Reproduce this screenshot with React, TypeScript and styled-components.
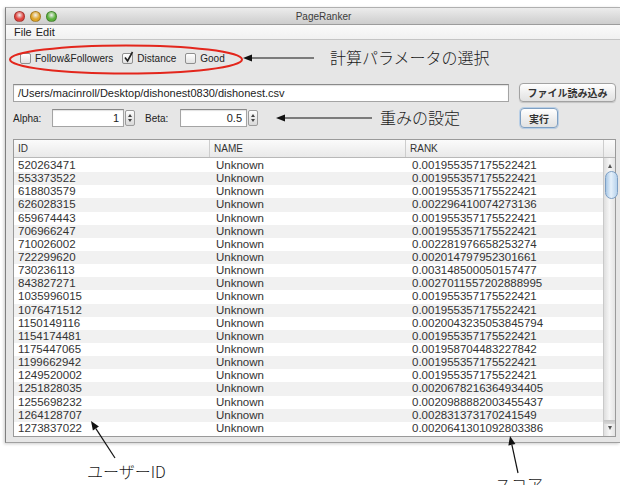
import styled, { createGlobalStyle } from "styled-components";

const UI_FONT = `"Liberation Sans", "Noto Sans CJK JP", sans-serif`;
const JP_FONT = `"Noto Sans CJK JP", "Liberation Sans", sans-serif`;

const ROWS: [string, string][] = [
  ["520263471", "0.001955357175522421"],
  ["553373522", "0.001955357175522421"],
  ["618803579", "0.001955357175522421"],
  ["626028315", "0.002296410074273136"],
  ["659674443", "0.001955357175522421"],
  ["706966247", "0.001955357175522421"],
  ["710026002", "0.002281976658253274"],
  ["722299620", "0.002014797952301661"],
  ["730236113", "0.003148500050157477"],
  ["843827271", "0.0027011557202888995"],
  ["1035996015", "0.001955357175522421"],
  ["1076471512", "0.001955357175522421"],
  ["1150149116", "0.0020043235053845794"],
  ["1154174481", "0.001955357175522421"],
  ["1175447065", "0.001958704483227842"],
  ["1199662942", "0.001955357175522421"],
  ["1249520002", "0.001955357175522421"],
  ["1251828035", "0.0020678216364934405"],
  ["1255698232", "0.0020988882003455437"],
  ["1264128707", "0.002831373170241549"],
  ["1273837022", "0.0020641301092803386"],
];

const GlobalStyle = createGlobalStyle`
  html, body {
    margin: 0;
    padding: 0;
    background: #fff;
  }
  body {
    font-family: ${UI_FONT};
    color: #1e1e1e;
  }
`;

const Page = styled.div`
  position: relative;
  width: 620px;
  height: 485px;
  overflow: hidden;
  background: #fff;
`;

/* ---------- window chrome ---------- */

const Window = styled.div`
  box-sizing: border-box;
  margin: 7px 0 0 5px;
  width: 615px;
  height: 436px;
  display: flex;
  flex-direction: column;
  background: #e6e6e6;
  border-left: 1px solid #7f7f7f;
  border-top: 1px solid #b0b0b0;
  border-bottom: 1px solid #a0a0a0;
  box-shadow: -1px 1px 3px rgba(0, 0, 0, 0.2);
`;

const TitleBar = styled.div`
  height: 16px;
  display: flex;
  align-items: center;
  padding-left: 8px;
  background: linear-gradient(#ececec, #cdcdcd);
  border-bottom: 1px solid #9c9c9c;
`;

const Lights = styled.div`
  display: flex;
  gap: 5px;
`;

const Light = styled.span<{ $color: string }>`
  width: 11px;
  height: 11px;
  border-radius: 50%;
  box-sizing: border-box;
  border: 1px solid rgba(0, 0, 0, 0.25);
  background: radial-gradient(
    circle at 50% 35%,
    #fff8 0,
    ${(p) => p.$color} 55%
  );
`;

const Title = styled.div`
  flex: 1;
  padding-right: 30px;
  text-align: center;
  font-size: 10px;
  color: #3c3c3c;
`;

const MenuBar = styled.div`
  height: 14px;
  display: flex;
  align-items: center;
  gap: 4px;
  padding-left: 8px;
  background: linear-gradient(#fafafa, #f1f1f1);
  border-bottom: 1px solid #c4c4c4;
  font-size: 11px;
  color: #222;
`;

const Content = styled.div`
  flex: 1;
  min-height: 0;
  display: flex;
  flex-direction: column;
  padding: 12px 4px 5px 7px;
`;

/* ---------- checkbox row ---------- */

const CheckRow = styled.div`
  height: 12px;
  display: flex;
  align-items: center;
  gap: 9px;
  padding-left: 7px;
`;

const CheckItem = styled.label`
  display: flex;
  align-items: center;
  gap: 4px;
  font-size: 10px;
  color: #222;
`;

const Box = styled.span`
  position: relative;
  width: 11px;
  height: 11px;
  box-sizing: border-box;
  border: 1px solid #8f8f8f;
  border-radius: 2px;
  background: linear-gradient(#ffffff, #e2e2e2);
`;

const Tick = styled.svg`
  position: absolute;
  left: 0;
  top: -3px;
  width: 11px;
  height: 12px;
`;

function Check({ label, checked }: { label: string; checked?: boolean }) {
  return (
    <CheckItem>
      <Box>
        {checked && (
          <Tick viewBox="0 0 11 12">
            <path
              d="M2 6.5 L4.6 10 L9.5 1"
              fill="none"
              stroke="#202020"
              strokeWidth="1.6"
            />
          </Tick>
        )}
      </Box>
      {label}
    </CheckItem>
  );
}

/* ---------- file row ---------- */

const PathRow = styled.div`
  margin-top: 19px;
  height: 19px;
  display: flex;
  align-items: center;
  gap: 10px;
`;

const Field = styled.div<{ $width: number; $align?: string }>`
  box-sizing: border-box;
  width: ${(p) => p.$width}px;
  height: 18px;
  padding: 0 4px;
  display: flex;
  align-items: center;
  justify-content: ${(p) => p.$align ?? "flex-start"};
  background: #fff;
  border: 1px solid #a4a4a4;
  border-top-color: #8a8a8a;
  box-shadow: inset 0 1px 1px rgba(0, 0, 0, 0.12);
  font-size: 11px;
  color: #222;
  white-space: nowrap;
`;

const Button = styled.div<{ $width: number; $default?: boolean }>`
  box-sizing: border-box;
  width: ${(p) => p.$width}px;
  height: ${(p) => (p.$default ? 20 : 19)}px;
  display: flex;
  align-items: center;
  justify-content: center;
  border-radius: 4px;
  border: 1px solid ${(p) => (p.$default ? "#7e9fc2" : "#a2a2a2")};
  background: linear-gradient(#ffffff, #ececec 60%, #e2e2e2);
  box-shadow: ${(p) =>
    p.$default
      ? "0 0 0 1px #b9cfe6, 0 1px 1px rgba(0,0,0,0.15)"
      : "0 1px 1px rgba(0,0,0,0.15)"};
  font-family: ${JP_FONT};
  font-size: 10px;
  font-weight: 700;
  color: #333;
`;

/* ---------- weight row ---------- */

const ParamRow = styled.div`
  margin-top: 6px;
  height: 20px;
  display: flex;
  align-items: center;
`;

const ParamLabel = styled.span<{ $width: number }>`
  width: ${(p) => p.$width}px;
  font-size: 10px;
  color: #222;
`;

const Stepper = styled.div`
  box-sizing: border-box;
  margin: 0 10px 0 1px;
  width: 10px;
  height: 16px;
  display: flex;
  flex-direction: column;
  align-items: center;
  justify-content: space-evenly;
  border: 1px solid #9c9c9c;
  border-radius: 2px;
  background: linear-gradient(#fdfdfd, #d9d9d9);
`;

const StepArrow = styled.span<{ $up?: boolean }>`
  width: 0;
  height: 0;
  border-left: 2px solid transparent;
  border-right: 2px solid transparent;
  ${(p) =>
    p.$up ? "border-bottom: 3px solid #444;" : "border-top: 3px solid #444;"}
`;

const Spacer = styled.div`
  flex: 1;
`;

const RunButton = styled(Button)`
  margin-right: 58px;
`;

/* ---------- result table ---------- */

const Table = styled.div`
  margin-top: 11px;
  flex: 1;
  min-height: 0;
  display: flex;
  flex-direction: column;
  border: 1px solid #9a9a9a;
  background: #fff;
`;

const COLUMNS = "196px 196px 198px 1fr";

const HeaderRow = styled.div`
  height: 17px;
  display: grid;
  grid-template-columns: ${COLUMNS};
  background: linear-gradient(#fbfbfb, #e9e9e9);
  border-bottom: 1px solid #b8b8b8;
`;

const HeadCell = styled.div`
  display: flex;
  align-items: center;
  padding-left: 4px;
  border-right: 1px solid #cdcdcd;
  font-size: 10px;
  color: #333;

  &:last-child {
    border-right: none;
  }
`;

const Body = styled.div`
  flex: 1;
  min-height: 0;
  display: flex;
`;

const RowList = styled.div`
  flex: 1;
  padding-top: 1px;
  overflow: hidden;
`;

const Row = styled.div<{ $odd: boolean }>`
  height: 13.15px;
  display: grid;
  grid-template-columns: 196px 196px 198px;
  background: ${(p) => (p.$odd ? "#f1f1f1" : "#ffffff")};
`;

const Cell = styled.div<{ $pad: number }>`
  padding-left: ${(p) => p.$pad}px;
  font-size: 11.5px;
  line-height: 13.15px;
  color: #333;
  white-space: nowrap;
`;

const ScrollTrack = styled.div`
  width: 11px;
  display: flex;
  flex-direction: column;
  align-items: center;
  border-left: 1px solid #c9c9c9;
  background: linear-gradient(90deg, #dedede, #f6f6f6 50%, #e4e4e4);
`;

const ScrollArrow = styled.span<{ $up?: boolean }>`
  margin: ${(p) => (p.$up ? "6px 0 3px" : "2px 0 6px")};
  width: 0;
  height: 0;
  border-left: 2px solid transparent;
  border-right: 2px solid transparent;
  ${(p) =>
    p.$up ? "border-bottom: 4px solid #555;" : "border-top: 4px solid #555;"}
`;

const Thumb = styled.div`
  box-sizing: border-box;
  margin-left: 4px;
  width: 13px;
  height: 28px;
  border-radius: 7px;
  border: 1px solid #7d9fc4;
  background: linear-gradient(90deg, #a9c8e6, #e6f1fb 45%, #b7d2ec);
`;

const TrackEnd = styled.div`
  width: 100%;
  height: 4px;
  margin-top: auto;
  background: linear-gradient(#c4c4c4, #d8d8d8);
`;

/* ---------- annotations ---------- */

const Overlay = styled.svg`
  position: absolute;
  left: 0;
  top: 0;
  width: 620px;
  height: 485px;
  pointer-events: none;
`;

const Note = styled.span<{ $x: number; $y: number }>`
  position: absolute;
  left: ${(p) => p.$x}px;
  top: ${(p) => p.$y}px;
  font-family: ${JP_FONT};
  font-size: 16px;
  font-weight: 300;
  line-height: 16px;
  color: #1a1a1a;
  white-space: nowrap;
`;

function Arrow({ x1, y1, x2, y2 }: { x1: number; y1: number; x2: number; y2: number }) {
  // line from the tail (x1,y1) to a filled head at (x2,y2)
  const a = Math.atan2(y2 - y1, x2 - x1);
  const len = 9;
  const half = 3.6;
  const bx = x2 - len * Math.cos(a);
  const by = y2 - len * Math.sin(a);
  const px = -Math.sin(a) * half;
  const py = Math.cos(a) * half;
  return (
    <g>
      <line x1={x1} y1={y1} x2={bx} y2={by} stroke="#111" strokeWidth="1.2" />
      <polygon
        points={`${x2},${y2} ${bx + px},${by + py} ${bx - px},${by - py}`}
        fill="#111"
      />
    </g>
  );
}

export default function App() {
  return (
    <Page>
      <GlobalStyle />
      <Window>
        <TitleBar>
          <Lights>
            <Light $color="#e0443e" />
            <Light $color="#e0a528" />
            <Light $color="#5bb13d" />
          </Lights>
          <Title>PageRanker</Title>
        </TitleBar>
        <MenuBar>
          <span>File</span>
          <span>Edit</span>
        </MenuBar>

        <Content>
          <CheckRow>
            <Check label="Follow&Followers" />
            <Check label="Distance" checked />
            <Check label="Good" />
          </CheckRow>

          <PathRow>
            <Field $width={497}>/Users/macinroll/Desktop/dishonest0830/dishonest.csv</Field>
            <Button $width={97}>ファイル読み込み</Button>
          </PathRow>

          <ParamRow>
            <ParamLabel $width={39}>Alpha:</ParamLabel>
            <Field $width={72} $align="flex-end">1</Field>
            <Stepper>
              <StepArrow $up />
              <StepArrow />
            </Stepper>
            <ParamLabel $width={35}>Beta:</ParamLabel>
            <Field $width={67} $align="flex-end">0.5</Field>
            <Stepper>
              <StepArrow $up />
              <StepArrow />
            </Stepper>
            <Spacer />
            <RunButton $width={38} $default>
              実行
            </RunButton>
          </ParamRow>

          <Table>
            <HeaderRow>
              <HeadCell>ID</HeadCell>
              <HeadCell>NAME</HeadCell>
              <HeadCell>RANK</HeadCell>
              <HeadCell />
            </HeaderRow>
            <Body>
              <RowList>
                {ROWS.map(([id, rank], i) => (
                  <Row key={id} $odd={i % 2 === 1}>
                    <Cell $pad={4}>{id}</Cell>
                    <Cell $pad={6}>Unknown</Cell>
                    <Cell $pad={6}>{rank}</Cell>
                  </Row>
                ))}
              </RowList>
              <ScrollTrack>
                <ScrollArrow $up />
                <Thumb />
                <TrackEnd />
                <ScrollArrow />
              </ScrollTrack>
            </Body>
          </Table>
        </Content>
      </Window>

      <Overlay viewBox="0 0 620 485">
        <ellipse cx="126" cy="59.5" rx="116" ry="14" fill="none" stroke="#e3261c" strokeWidth="2" />
        <Arrow x1={314} y1={58} x2={243} y2={58} />
        <Arrow x1={372} y1={118} x2={276} y2={118} />
        <Arrow x1={115} y1={458} x2={91} y2={421} />
        <Arrow x1={518} y1={473} x2={510} y2={436} />
      </Overlay>
      <Note $x={330} $y={49}>計算パラメータの選択</Note>
      <Note $x={380} $y={109}>重みの設定</Note>
      <Note $x={87} $y={463}>ユーザーID</Note>
      <Note $x={495} $y={476}>スコア</Note>
    </Page>
  );
}
